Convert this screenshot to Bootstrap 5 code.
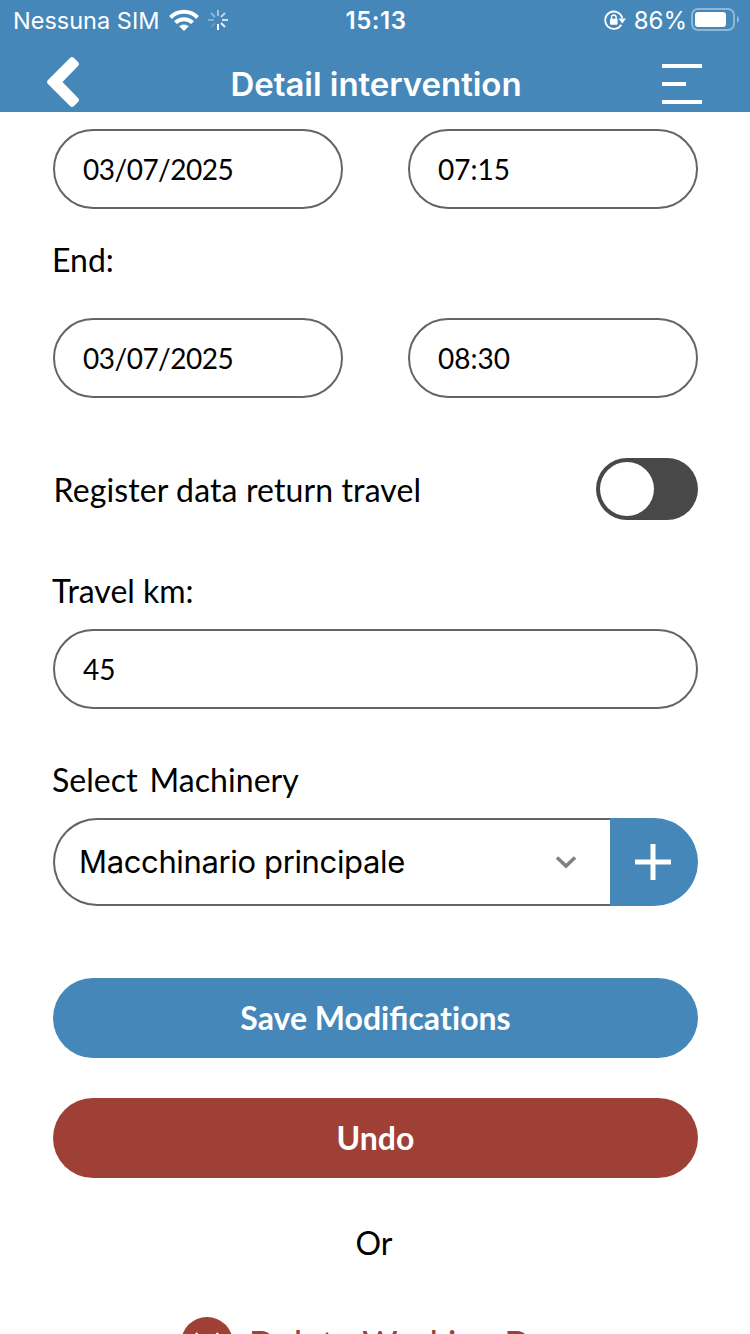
<!DOCTYPE html>
<html lang="en">
<head>
<meta charset="utf-8">
<meta name="viewport" content="width=device-width, initial-scale=1">
<title>Detail intervention</title>
<link href="https://cdn.jsdelivr.net/npm/bootstrap@5.3.0/dist/css/bootstrap.min.css" rel="stylesheet">
<style>
:root { --brand: #4687b9; --danger: #9f4037; --line: #646464; }
html, body { height: 100%; }
body { font-family: Lato, sans-serif; font-size: 32px; line-height: 40px; color: #000; overflow: hidden; }
.screen { height: 1334px; }
.topbar { background: var(--brand); height: 112px; font-family: Inter, sans-serif; }
.status { height: 42px; padding: 0 11px 0 13px; font-size: 24px; line-height: 42px; display: grid; grid-template-columns: 1fr auto 1fr; }
.status svg { margin-bottom: 2px; }
.carrier { font-size: 23.5px; letter-spacing: 0; }
.clock { font-weight: 600; letter-spacing: .5px; }
.titlebar { height: 70px; padding: 14px 48px 0 46px; }
.back-icon { margin-top: -4px; }
.page-title { font-size: 33px; font-weight: 600; line-height: 40px; margin: 0 0 0 10px; letter-spacing: -.05px; }
.content { padding: 17px 52px 0 53px; }
.field { height: 80px; border: 2px solid var(--line); border-radius: 40px; padding: 0 28px; font-size: 28px; color: #000; background: #fff; }
.date-value { letter-spacing: -.5px; }
.pair { display: grid; grid-template-columns: 290px 290px; justify-content: space-between; }
.field-label { height: 40px; line-height: 39px; margin-left: -1px; white-space: pre; }
.machinery-label { word-spacing: -2.3px; letter-spacing: .05px; }
.switch-text { letter-spacing: .12px; padding: 1px 0 0 .5px; }
.switch-track { width: 102px; height: 62px; border-radius: 31px; background: #484848; padding: 4px; }
.switch-knob { width: 54px; height: 54px; border-radius: 50%; background: #fff; }
.picker { height: 88px; }
.picker-box { border: 2px solid var(--line); border-right: 0; border-radius: 44px 0 0 44px; padding: 0 33px 0 24px; font-family: Inter, sans-serif; font-size: 31px; letter-spacing: -.36px; }
.picker-add { width: 88px; background: var(--brand); border-radius: 0 44px 44px 0; border: 0; padding: 0 2px 1px 0; }
.action { height: 80px; border: 0; border-radius: 40px; font-size: 32px; font-weight: 700; color: #fff; padding: 0; }
.action-save { background: var(--brand); margin-top: 72px; }
.action-undo { background: var(--danger); margin-top: 40px; }
.no-liga { font-variant-ligatures: none; }
.or-text { padding-right: 3px; }
.delete-row { color: var(--danger); margin: 54px 0 0 128px; gap: 16px; }
.delete-text { font-size: 34px; font-weight: 500; letter-spacing: .75px; }
</style>
</head>
<body>
<div class="screen overflow-hidden">
  <header class="topbar text-white">
    <div class="status">
      <div class="d-flex align-items-center">
        <span class="carrier">Nessuna SIM</span>
        <svg style="margin-left:9px" width="32" height="24" viewBox="0 0 32 24" fill="none" stroke="#fff" stroke-width="4">
          <path d="M2.500 9.500A19 19 0 0 1 29.500 9.500"/><path d="M7.500 14.700A12 12 0 0 1 24.500 14.700"/><path d="M16 23L11.200 18.300A7 7 0 0 1 20.800 18.300Z" fill="#fff" stroke="none"/>
        </svg>
        <svg style="margin-left:7px" width="22" height="22" viewBox="-11 -11 22 22" stroke="#fff" stroke-width="2">
          <path d="M0 4V10"/><path d="M3 3L7 7" opacity=".9"/><path d="M4 0H10" opacity=".75"/><path d="M3-3L7-7" opacity=".65"/><path d="M0-4V-10" opacity=".5"/><path d="M-3-3L-7-7" opacity=".4"/><path d="M-4 0H-10" opacity=".3"/><path d="M-3 3L-7 7" opacity=".15"/>
        </svg>
      </div>
      <div class="clock">15:13</div>
      <div class="d-flex align-items-center justify-content-end">
        <svg class="me-2" width="22" height="20" viewBox="0 0 22 20" fill="none" stroke="#fff" stroke-width="1.800">
          <path d="M17.300 14.800A8.700 8.700 0 1 1 18.300 8"/><path d="M14.500 8.500H22L18.300 13.500Z" fill="#fff" stroke="none"/><rect x="6" y="8.800" width="7.600" height="6" rx="1" fill="#fff" stroke="none"/><path d="M7.500 9V7.300a2.300 2.300 0 0 1 4.600 0V9" stroke-width="1.400"/>
        </svg>
        <span class="percent">86%</span>
        <svg class="ms-1" width="48" height="24" viewBox="0 0 48 24">
          <rect x="1" y="1" width="42" height="21" rx="6" fill="none" stroke="#fff" stroke-opacity=".4" stroke-width="2"/><rect x="4" y="4" width="31" height="15" rx="3" fill="#fff"/><path d="M46 8Q50 11.500 46 15Z" fill="#fff" opacity=".45"/>
        </svg>
      </div>
    </div>
    <nav class="titlebar d-flex justify-content-between align-items-center">
      <svg class="back-icon" width="34" height="52" viewBox="0 0 34 52" fill="#fff"><path d="M24 2Q26 0 28 2L32 6Q34 8 32 10L16.500 26L32 42Q34 44 32 46L28 50Q26 52 24 50L2 28Q0 26 2 24Z"/></svg>
      <h1 class="page-title">Detail intervention</h1>
      <svg width="40" height="40" viewBox="0 0 40 40" fill="#fff"><path d="M0 0H40V4H0ZM0 18H24V22H0ZM0 36H40V40H0Z"/></svg>
    </nav>
  </header>

  <main class="content">
    <div class="pair">
      <div class="field date-value d-flex align-items-center">03/07/2025</div>
      <div class="field d-flex align-items-center">07:15</div>
    </div>
    <div class="field-label" style="margin-top:31px">End:</div>
    <div class="pair" style="margin-top:38px">
      <div class="field date-value d-flex align-items-center">03/07/2025</div>
      <div class="field d-flex align-items-center">08:30</div>
    </div>
    <div class="d-flex justify-content-between align-items-center" style="margin-top:60px">
      <span class="switch-text">Register data return travel</span>
      <div class="switch-track" role="switch" aria-checked="false"><div class="switch-knob"></div></div>
    </div>
    <div class="field-label" style="margin-top:51px">Travel km:</div>
    <div class="field d-flex align-items-center" style="margin-top:18px">45</div>
    <div class="field-label machinery-label" style="margin-top:51px">Select  Machinery</div>
    <div class="picker d-flex" style="margin-top:18px">
      <div class="picker-box flex-grow-1 d-flex align-items-center justify-content-between">
        <span class="picker-text">Macchinario principale</span>
        <svg width="22" height="14" viewBox="0 0 22 14" fill="none" stroke="#808080" stroke-width="3.500"><path d="M2 2.500L11 11L20 2.500"/></svg>
      </div>
      <button class="picker-add d-flex align-items-center justify-content-center" aria-label="Add">
        <svg width="36" height="36" viewBox="0 0 36 36" fill="#fff"><path d="M15.500 0H20.500V15.500H36V20.500H20.500V36H15.500V20.500H0V15.500H15.500Z"/></svg>
      </button>
    </div>
    <button class="action action-save d-block w-100">Save Modifica<span class="no-liga">tions</span></button>
    <button class="action action-undo d-block w-100">Undo</button>
    <div class="text-center or-text" style="margin-top:45px">Or</div>
    <div class="delete-row d-flex align-items-center">
      <svg class="flex-shrink-0" width="52" height="52" viewBox="0 0 52 52"><circle cx="26" cy="26" r="26" fill="#9f4037"/><path d="M14.500 16.500L36.500 38.500M37.500 16.500L15.500 38.500" stroke="#fff" stroke-width="3.500"/></svg>
      <span class="delete-text text-nowrap">Delete Working Day</span>
    </div>
  </main>
</div>
<script src="https://cdn.jsdelivr.net/npm/bootstrap@5.3.0/dist/js/bootstrap.bundle.min.js"></script>
</body>
</html>
